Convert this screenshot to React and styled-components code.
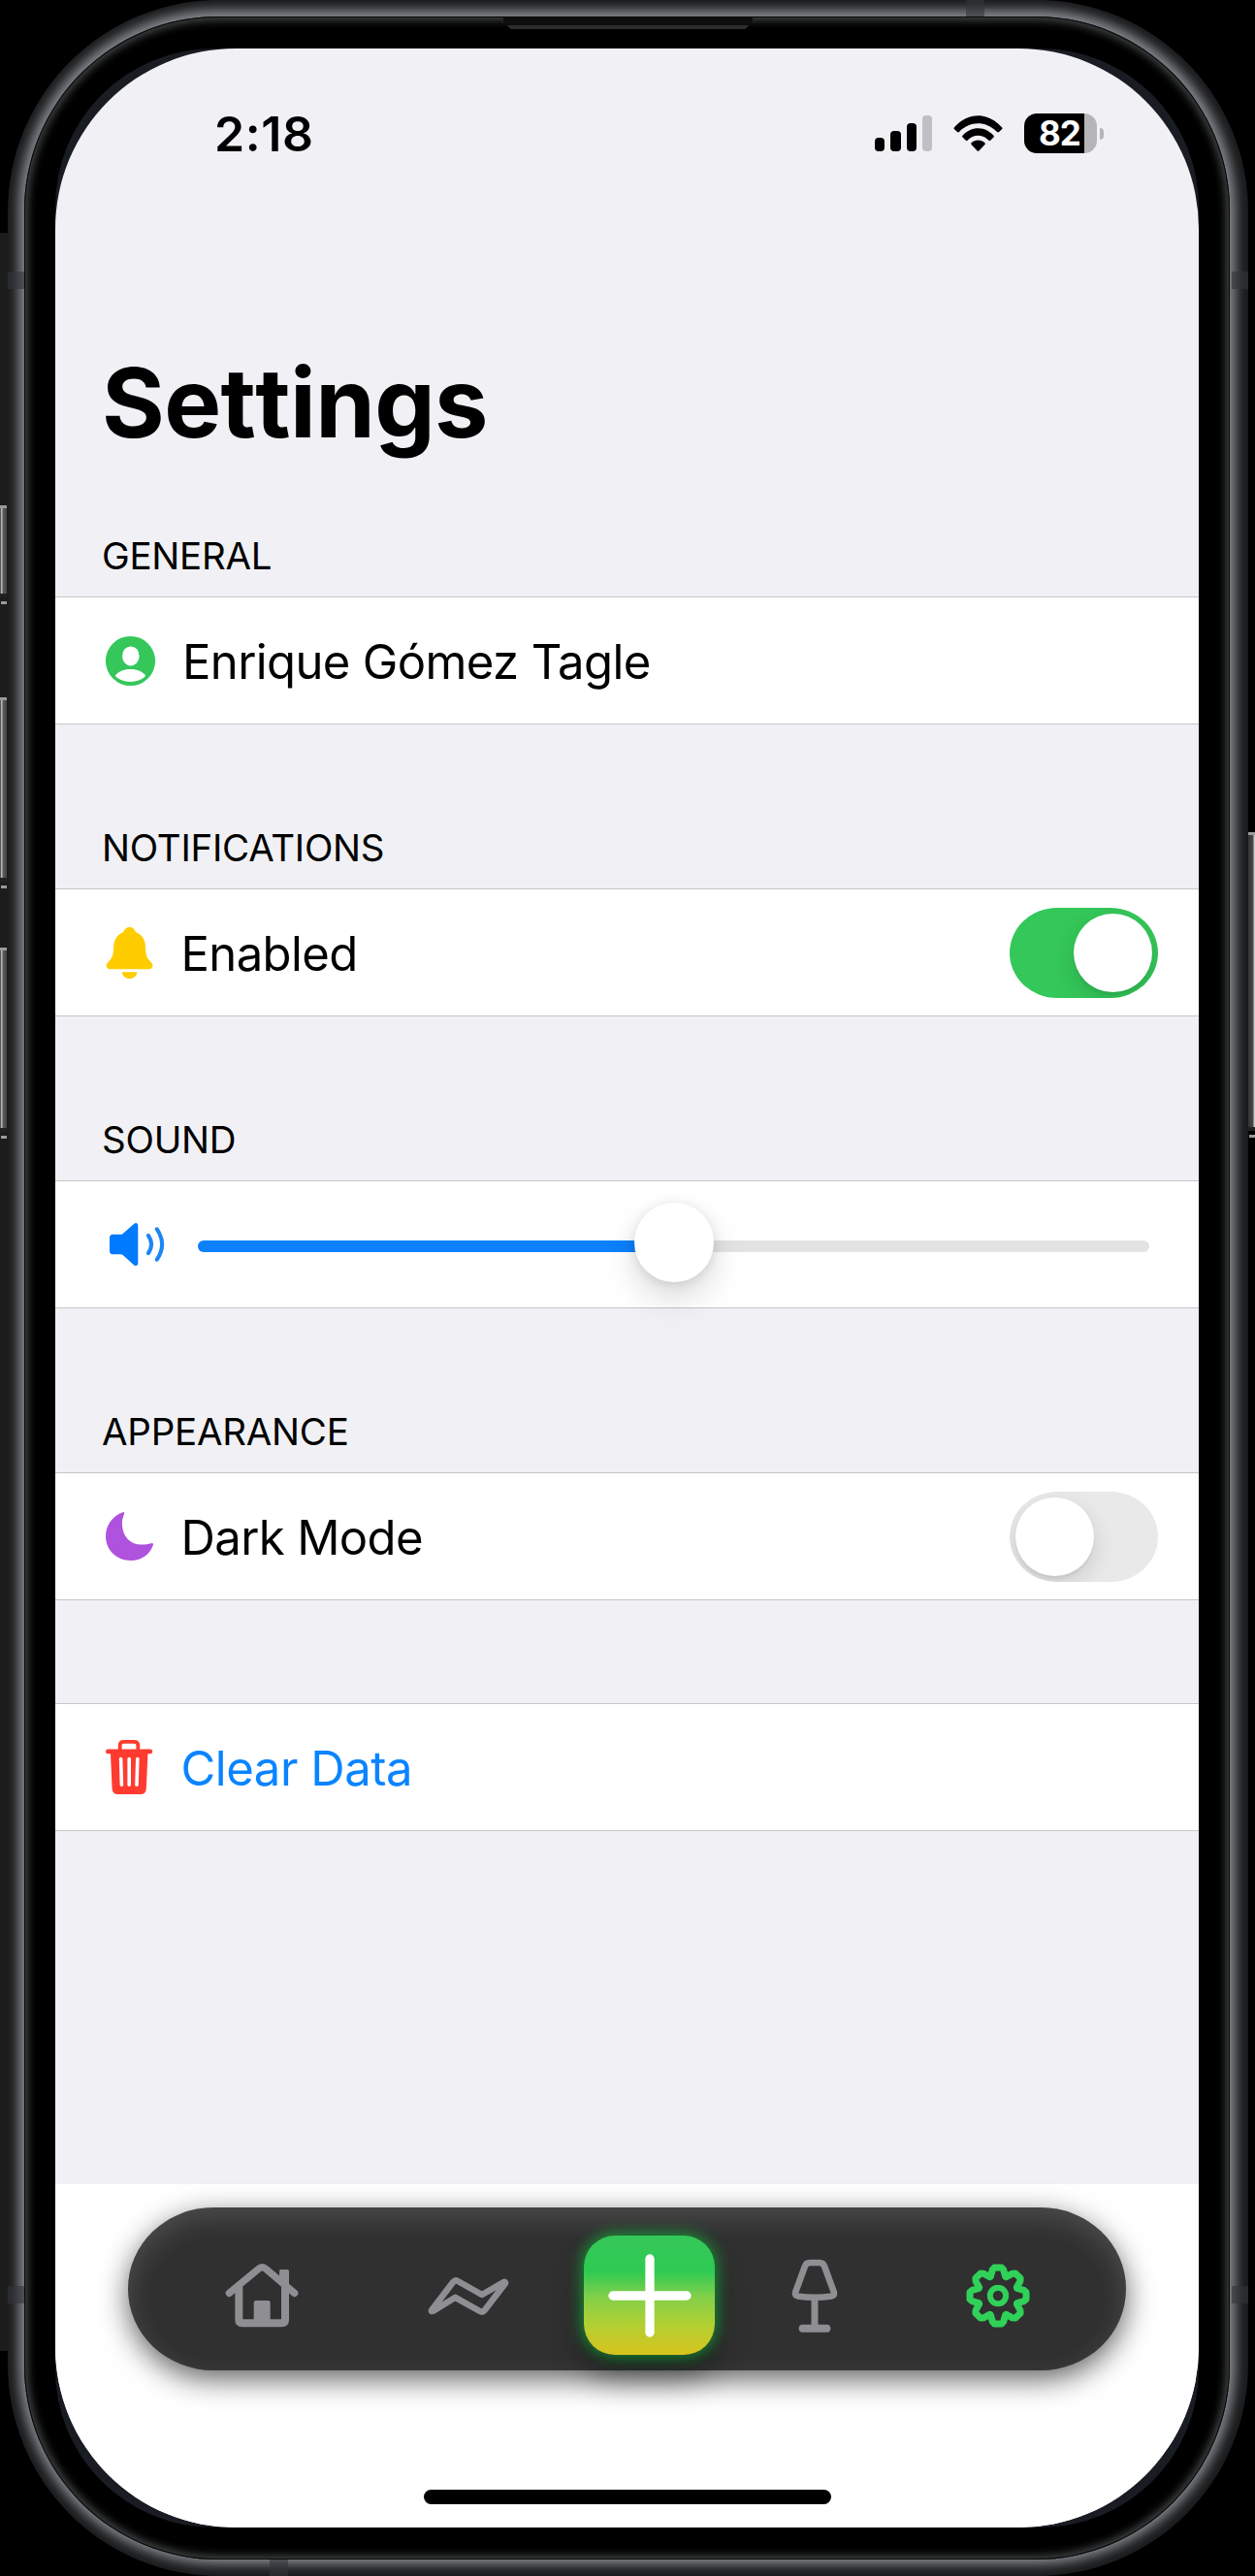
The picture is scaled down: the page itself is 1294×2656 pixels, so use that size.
import React from 'react';
import styled, { createGlobalStyle } from 'styled-components';

const GlobalStyle = createGlobalStyle`
  * { box-sizing: border-box; }
  html, body { margin: 0; padding: 0; background: #000; }
  body { font-family: Inter, "Liberation Sans", sans-serif; color: #000; }
  svg { display: block; flex: none; }
`;

/* ---------- device ---------- */

const Stage = styled.div`
  position: relative;
  width: 1294px;
  height: 2656px;
  overflow: hidden;
  background: #000;
`;

const SideStrip = styled.div`
  position: absolute;
  left: 0;
  top: 240px;
  width: 24px;
  height: 2184px;
  background: #1c1c1c;
`;

const SideButton = styled.div`
  position: absolute;
  ${(p) => (p.$side === 'left' ? 'left: 0;' : 'right: 0;')}
  top: ${(p) => p.$top}px;
  width: 7px;
  height: ${(p) => p.$height}px;
  background: ${(p) =>
    p.$side === 'left'
      ? 'linear-gradient(90deg, #55565a 0 1px, #b9b9b9 1px 2px, #5c5c5c 3px, #444 7px)'
      : 'linear-gradient(90deg, #333 0, #4a4a4a 5px, #c9c9c9 6px)'};
  border-top: 3px solid #9a9a9a;
  border-bottom: 4px solid #222;

  &::after {
    content: '';
    position: absolute;
    left: 1px;
    right: 0;
    bottom: -11px;
    height: 3px;
    background: #9a9a9a;
  }
`;

const Body = styled.div`
  position: relative;
  height: 2656px;
  margin: 0 7px 0 8px;
  padding: 17px 19px 17px 17px;
  border-radius: 218px;
  overflow: hidden;
  background: #1a1b1c;
`;

const Antenna = styled.div`
  position: absolute;
  background: rgba(50, 53, 56, 0.6);
  ${(p) => p.$edge}: 0;
  ${(p) => (p.$edge === 'left' || p.$edge === 'right'
    ? `top: ${p.$at}px; width: 17px; height: 18px;`
    : `left: ${p.$at}px; height: 17px; width: 19px;`)}
`;

const Bezel = styled.div`
  position: relative;
  height: 2622px;
  padding: 33px 32px;
  border-radius: 200px;
  background: #000;
  box-shadow: 0 -1px 12px 6px #83878c, inset 0 0 0 1px #07090a, inset 0 0 9px 4px #434645;
`;

const Speaker = styled.div`
  position: absolute;
  left: 491px;
  top: 1px;
  width: 263px;
  height: 12px;
  background: #2b2c2c;
  clip-path: polygon(0 0, 100% 0, 97% 75%, 96% 100%, 4% 100%, 3% 75%);

  &::before {
    content: '';
    display: block;
    height: 8px;
    margin: 0 3px;
    background: #0e0e0e;
  }
`;

const Glass = styled.div`
  height: 2556px;
  border-radius: 163px;
  background: #1a1c23;
`;

const Screen = styled.main`
  display: flex;
  flex-direction: column;
  height: 2556px;
  border-radius: 186px;
  overflow: hidden;
  background: #f1f1f5;
`;

/* ---------- status bar ---------- */

const StatusBar = styled.header`
  display: flex;
  align-items: center;
  height: 175px;
  padding: 0 98px 0 164px;
`;

const Clock = styled.time`
  flex: 1;
  font-size: 50px;
  line-height: 60px;
  font-weight: 600;
  letter-spacing: 0.6px;
`;

const StatusIcons = styled.div`
  display: flex;
  align-items: center;
  gap: 22px;
`;

const SignalBars = styled.div`
  display: flex;
  align-items: flex-end;
  gap: 6px;
  height: 37px;
`;

const SignalBar = styled.span`
  width: 10.2px;
  height: ${(p) => p.$height}px;
  border-radius: 4px;
  background: ${(p) => (p.$dim ? '#c0c0c4' : '#000')};
`;

const Battery = styled.div`
  display: flex;
  align-items: center;
  gap: 3px;
`;

const BatteryShell = styled.div`
  width: 75px;
  height: 41px;
  padding-left: 15px;
  border-radius: 13px;
  background: linear-gradient(90deg, #000 62px, #b5b5b8 62px);
  color: #fff;
  font-size: 35px;
  line-height: 41px;
  font-weight: 700;
  letter-spacing: -1px;
`;

const BatteryNub = styled.div`
  width: 4px;
  height: 12px;
  border-radius: 0 4px 4px 0;
  background: #b5b5b8;
`;

/* ---------- settings list ---------- */

const Content = styled.div`
  height: 2027px;
`;

const Title = styled.h1`
  margin: 140px 0 0 48px;
  font-size: 99px;
  line-height: 100px;
  font-weight: 700;
  letter-spacing: -0.6px;
  font-kerning: none;
`;

const Groups = styled.div`
  display: flex;
  flex-direction: column;
  gap: 105px;
  margin-top: 86px;
`;

const Group = styled.section`
  margin-top: ${(p) => p.$offset || 0}px;
`;

const GroupHeader = styled.h2`
  margin: 0 0 20px 48px;
  font-size: 38.5px;
  line-height: 44px;
  font-weight: 400;
  letter-spacing: -0.25px;
`;

const Row = styled.div`
  display: flex;
  align-items: center;
  height: 132px;
  padding: 0 ${(p) => p.$right || 42}px 0 50px;
  border: solid #c6c6c9;
  border-width: 1px 0;
  background: #fff;
`;

const RowLabel = styled.span`
  flex: 1;
  padding-top: 4px;
  margin-left: ${(p) => p.$gap || 19.5}px;
  font-size: 49px;
  line-height: 60px;
  letter-spacing: ${(p) => p.$tracking || -0.62}px;
  color: ${(p) => p.$color || '#000'};
`;

const Switch = styled.div`
  display: flex;
  justify-content: ${(p) => (p.$on ? 'flex-end' : 'flex-start')};
  width: 153px;
  height: 93px;
  padding: 6px;
  border-radius: 49px / 46.5px;
  background: ${(p) => (p.$on ? '#34c759' : '#e9e9ea')};
  overflow: hidden;
`;

const SwitchKnob = styled.div`
  width: 81px;
  height: 81px;
  border-radius: 50%;
  background: #fff;
  box-shadow: 0 9px 24px rgba(0, 0, 0, 0.13), 0 3px 3px rgba(0, 0, 0, 0.06);
`;

const Slider = styled.div`
  position: relative;
  flex: 1;
  height: 12px;
  margin: 4px 0 0 33px;
  border-radius: 6px;
  background: #e3e3e4;
`;

const SliderFill = styled.div`
  width: 50%;
  height: 12px;
  border-radius: 6px;
  background: #0c81fb;
`;

const SliderKnob = styled.div`
  position: absolute;
  left: 50%;
  top: 50%;
  width: 82px;
  height: 82px;
  margin: -45px 0 0 -41px;
  border-radius: 50%;
  background: #fff;
  box-shadow: 0 16px 34px rgba(0, 0, 0, 0.15), 0 2px 12px rgba(0, 0, 0, 0.1);
`;

/* ---------- tab bar ---------- */

const Footer = styled.footer`
  display: flex;
  flex-direction: column;
  align-items: center;
  height: 354px;
  padding-top: 24px;
  background: #fff;
`;

const TabBar = styled.nav`
  display: grid;
  grid-template-columns: 276px 149px 225px 115px 264px;
  align-items: center;
  justify-items: center;
  width: 1029px;
  height: 168px;
  padding-top: 13px;
  border-radius: 88px / 84px;
  background: #303030;
  box-shadow: 0 9px 30px rgba(0, 0, 0, 0.62), inset 0 10px 28px rgba(255, 255, 255, 0.14);
`;

const AddButton = styled.div`
  display: flex;
  align-items: center;
  justify-content: center;
  width: 135px;
  height: 123px;
  border-radius: 32px;
  background: linear-gradient(
    #35c75a 0%, #2ecb53 30%, #4ecb50 38%, #84d049 52%, #b4cf31 76%, #d8c31e 100%
  );
  box-shadow: 0 0 16px 2px rgba(20, 185, 60, 0.75), 0 24px 32px rgba(0, 0, 0, 0.4);
`;

const HomeIndicator = styled.div`
  width: 420px;
  height: 15px;
  margin-top: 123px;
  border-radius: 8px;
  background: #000;
`;

/* ---------- icons ---------- */

const WifiIcon = () => (
  <svg width="51" height="37" viewBox="0 0 51 37">
    <path d="M1 12.2C8 4.6 16.500 0.300 25.500 0.300S43 4.600 50 12.200Q51 13.300 50 14.300L47 17Q46 17.800 45 16.900C39.500 11.300 32.800 8.300 25.500 8.300S11.500 11.300 6 16.900Q5 17.800 4 17L1 14.300Q0 13.300 1 12.200Z" />
    <path d="M9.500 20.700C14 15.800 19.500 13.200 25.500 13.200S37 15.800 41.500 20.700Q42.300 21.600 41.500 22.500L38.200 25.800Q37.300 26.500 36.400 25.700C33.300 22.500 29.600 20.700 25.500 20.700S17.700 22.500 14.600 25.700Q13.700 26.500 12.800 25.800L9.500 22.500Q8.700 21.600 9.500 20.700Z" />
    <path d="M18.600 28.300C22.500 24.600 28.500 24.600 32.400 28.300Q33.200 29.100 32.500 30L26.400 36.400Q25.500 37.200 24.600 36.400L18.500 30Q17.800 29.100 18.600 28.300Z" />
  </svg>
);

const PersonIcon = () => (
  <svg width="60" height="60" viewBox="0 0 60 60">
    <circle cx="27.500" cy="30.500" r="25.600" fill="#35c75a" />
    <ellipse cx="27.800" cy="25.400" rx="8.800" ry="10" fill="#fff" />
    <path d="M11.800 45.800C14.500 41.300 20.500 38.900 27.500 38.900S40.500 41.300 43.200 45.800C39.500 49.800 34 52 27.500 52S15.500 49.800 11.800 45.800Z" fill="#fff" />
  </svg>
);

const BellIcon = () => (
  <svg width="60" height="60" viewBox="0 0 60 60" fill="#fc0">
    <path d="M26.600 4C30 4 32 6 32.900 9C39 11.500 42.600 16.500 43 23.500C43.300 32 44 34.500 46.500 37.500L49.300 40.800C51.500 43.500 50.500 47.200 46.800 47.200H6.400C2.700 47.200 1.700 43.500 3.900 40.800L6.700 37.500C9.200 34.500 9.900 32 10.200 23.500C10.600 16.500 14.200 11.500 20.300 9C21.200 6 23.200 4 26.600 4Z" />
    <path d="M18.800 50.200H34.400C33.800 54.500 30.800 57 26.600 57S19.400 54.500 18.800 50.200Z" />
  </svg>
);

const SpeakerIcon = () => (
  <svg width="64" height="60" viewBox="0 0 64 60">
    <path d="M9.500 19.800H17.500Q18.800 19.800 19.700 18.900L31 8.900C33 7.200 35.300 8 35.300 10.500V49.500C35.300 52 33 52.800 31 51.200L19.700 41.100Q18.800 40.200 17.500 40.200H9.500Q6 40.200 6 36.700V23.300Q6 19.800 9.500 19.800Z" fill="#007aff" />
    <path d="M46 21Q52.200 30 46 39M54.800 14.300Q65.400 30 54.800 45.700" fill="none" stroke="#1b86f5" strokeWidth="4.100" strokeLinecap="round" />
  </svg>
);

const MoonIcon = () => (
  <svg width="60" height="60" viewBox="0 0 60 60">
    <path d="M19.500 5.300C20.600 4.700 21.600 5.500 21.100 6.800C19.500 11 18.700 14 18.900 18C19.500 31 28 38.500 38.500 38.600C42.500 38.700 45.500 38.200 49 37.200C50.400 36.800 51.300 37.800 50.900 39C47.500 49 38.500 55 28 55C13 55 2 44 2 30C2 19 8.500 9.500 19.500 5.300Z" fill="#af52de" />
  </svg>
);

const TrashIcon = () => (
  <svg width="60" height="60" viewBox="0 0 60 60">
    <path d="M16.700 13V7.500Q16.700 3.800 20.500 3.800H31.500Q35.300 3.800 35.300 7.500V13" fill="none" stroke="#ff3b30" strokeWidth="3.800" />
    <rect x="2" y="11.600" width="48.200" height="4.600" rx="2.300" fill="#ff3b30" />
    <path d="M6.900 14.500H45.500L43.800 52Q43.500 58 37.700 58H14.700Q8.900 58 8.600 52Z" fill="#ff3b30" />
    <path d="M17.600 21.500L18.400 48.200M26.200 21.500V48.200M34.800 21.500L34 48.200" fill="none" stroke="#fff" strokeWidth="3.600" strokeLinecap="round" />
  </svg>
);

const HouseIcon = () => (
  <svg width="80" height="70" viewBox="690 228 240 210">
    <g fill="none" stroke="#8e8e93" strokeLinecap="round" strokeLinejoin="round">
      <path d="M709 325L801 249Q811 241 821 249L911 325" strokeWidth="22" />
      <path d="M739 306V408Q739 418 749 418H872Q882 418 882 408V306" strokeWidth="24" strokeLinecap="butt" />
    </g>
    <path d="M864 300V257Q864 252 869 252H889Q894 252 894 257V316ZM785 412V354Q785 348 791 348H830Q836 348 836 354V412Z" fill="#8e8e93" />
  </svg>
);

const TrendIcon = () => (
  <svg width="90" height="46" viewBox="437.500 2344 90 46">
    <path d="M444.700 2381.800L466.800 2352.800Q468.800 2350.500 471.600 2352L496.400 2366L518.500 2353.200C520.500 2352.200 521 2353.600 520 2355L499 2382.200Q497 2384.500 494.300 2383L469 2368.800L446.300 2382.600C444.500 2383.500 443.900 2383 444.700 2381.800Z" fill="none" stroke="#8e8e93" strokeWidth="6.500" strokeLinejoin="round" />
  </svg>
);

const PlusIcon = () => (
  <svg width="86" height="86" viewBox="0 0 86 86">
    <path d="M43 5V81M5 43H81" stroke="#fff" strokeWidth="9.300" strokeLinecap="round" />
  </svg>
);

const LampIcon = () => (
  <svg width="48" height="76" viewBox="815.400 2328.500 48 76">
    <g fill="none" stroke="#8e8e93" strokeLinejoin="round" strokeLinecap="round">
      <path d="M834.500 2332.500H844.300Q848.500 2332.500 849.600 2336.500L859.300 2363Q860.200 2366.200 857 2366.900Q848 2368.300 839.400 2368.300T821.800 2366.900Q818.600 2366.200 819.500 2363L829.200 2336.500Q830.300 2332.500 834.500 2332.500Z" strokeWidth="6.600" />
      <path d="M839.400 2369V2398" strokeWidth="7" />
      <path d="M827 2400.300H851.800" strokeWidth="8" />
    </g>
  </svg>
);

const gearPath = Array.from({ length: 8 }, (_, k) => {
  const turn = (k * Math.PI) / 4;
  return [[-23, -59], [-17, -80], [-11, -87], [11, -87], [17, -80], [23, -59]]
    .map(([x, y]) => [
      (x * Math.cos(turn) - y * Math.sin(turn)).toFixed(2),
      (x * Math.sin(turn) + y * Math.cos(turn)).toFixed(2),
    ].join(' '))
    .join('L');
}).join('L');

const GearIcon = () => (
  <svg width="68" height="68" viewBox="-102 -102 204 204">
    <g fill="none" stroke="#30d158" strokeWidth="21" strokeLinejoin="round">
      <path d={`M${gearPath}Z`} />
      <circle r="24.500" strokeWidth="18" />
    </g>
  </svg>
);

/* ---------- app ---------- */

export default function App() {
  return (
    <>
      <GlobalStyle />
      <Stage>
        <SideStrip />
        <SideButton $side="left" $top={521} $height={95} />
        <SideButton $side="left" $top={719} $height={190} />
        <SideButton $side="left" $top={977} $height={190} />
        <SideButton $side="right" $top={858} $height={308} />
        <Body>
          <Bezel>
            <Speaker />
            <Glass>
              <Screen>
                <StatusBar>
                  <Clock>2:18</Clock>
                  <StatusIcons>
                    <SignalBars>
                      <SignalBar $height={14} />
                      <SignalBar $height={21} />
                      <SignalBar $height={29} />
                      <SignalBar $height={37} $dim />
                    </SignalBars>
                    <WifiIcon />
                    <Battery>
                      <BatteryShell>82</BatteryShell>
                      <BatteryNub />
                    </Battery>
                  </StatusIcons>
                </StatusBar>
                <Content>
                  <Title>Settings</Title>
                  <Groups>
                    <Group>
                      <GroupHeader>GENERAL</GroupHeader>
                      <Row>
                        <PersonIcon />
                        <RowLabel $gap={21}>Enrique Gómez Tagle</RowLabel>
                      </Row>
                    </Group>
                    <Group>
                      <GroupHeader>NOTIFICATIONS</GroupHeader>
                      <Row>
                        <BellIcon />
                        <RowLabel>Enabled</RowLabel>
                        <Switch $on><SwitchKnob /></Switch>
                      </Row>
                    </Group>
                    <Group>
                      <GroupHeader>SOUND</GroupHeader>
                      <Row $right={51}>
                        <SpeakerIcon />
                        <Slider>
                          <SliderFill />
                          <SliderKnob />
                        </Slider>
                      </Row>
                    </Group>
                    <Group>
                      <GroupHeader>APPEARANCE</GroupHeader>
                      <Row>
                        <MoonIcon />
                        <RowLabel>Dark Mode</RowLabel>
                        <Switch><SwitchKnob /></Switch>
                      </Row>
                    </Group>
                    <Group $offset={1}>
                      <Row>
                        <TrashIcon />
                        <RowLabel $color="#0a84ff" $tracking={-0.45}>Clear Data</RowLabel>
                      </Row>
                    </Group>
                  </Groups>
                </Content>
                <Footer>
                  <TabBar>
                    <HouseIcon />
                    <TrendIcon />
                    <AddButton><PlusIcon /></AddButton>
                    <LampIcon />
                    <GearIcon />
                  </TabBar>
                  <HomeIndicator />
                </Footer>
              </Screen>
            </Glass>
          </Bezel>
          <Antenna $edge="left" $at={280} />
          <Antenna $edge="right" $at={280} />
          <Antenna $edge="left" $at={2357} />
          <Antenna $edge="right" $at={2357} />
          <Antenna $edge="top" $at={988} />
          <Antenna $edge="bottom" $at={270} />
        </Body>
      </Stage>
    </>
  );
}
